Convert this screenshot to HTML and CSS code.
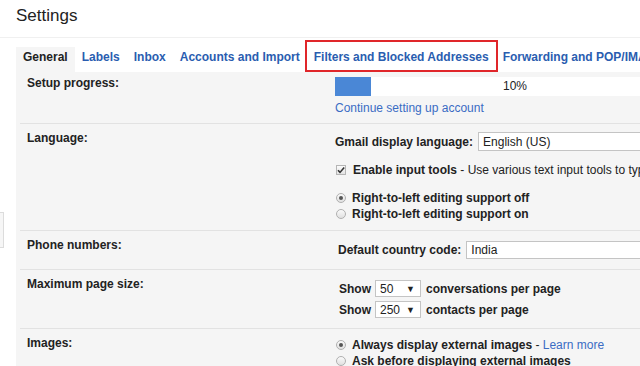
FILE: index.html
```html
<!DOCTYPE html>
<html lang="en">
<head>
  <meta charset="UTF-8" />
  <meta name="viewport" content="width=device-width, initial-scale=1" />
  <title>Settings</title>
  <link rel="stylesheet" href="styles.css">
</head>
<body>
  <div class="page-title">Settings</div>

  <div class="main">
    <div class="gutter"><div class="gutter-tab"></div></div>

    <div class="content">
      <div class="tabs">
        <span class="tab active">General</span>
        <span class="tab">Labels</span>
        <span class="tab">Inbox</span>
        <span class="tab">Accounts and Import</span>
        <span class="tab marked">Filters and Blocked Addresses</span>
        <span class="tab">Forwarding and POP/IMAP</span>
      </div>

      <div class="panel">
        <div class="row first">
          <div class="label">Setup progress:</div>
          <div class="value setup">
            <div class="progress">
              <div class="progress-fill" style="width: 10%"></div>
              <span class="progress-text">10%</span>
            </div>
            <a class="link setup-link">Continue setting up account</a>
          </div>
        </div>

        <div class="row">
          <div class="label">Language:</div>
          <div class="value language">
            <div class="field">
              <b>Gmail display language:</b>
              <span class="select wide">English (US)</span>
            </div>
            <div class="check-line">
              <span class="checkbox">
                <svg width="10" height="10" viewBox="0 0 10 10"><path d="M2 5.2 L4 7.4 L8.2 2.4" fill="none" stroke="#333" stroke-width="1.6"/></svg>
              </span>
              <b>Enable input tools</b>&nbsp;- Use various text input tools to type in the language of your choice
            </div>
            <div class="radios">
              <div class="radio-line"><span class="radio on"></span><b>Right-to-left editing support off</b></div>
              <div class="radio-line"><span class="radio"></span><b>Right-to-left editing support on</b></div>
            </div>
          </div>
        </div>

        <div class="row">
          <div class="label">Phone numbers:</div>
          <div class="value phone">
            <div class="field">
              <b>Default country code:</b>
              <span class="select wide short-gap">India</span>
            </div>
          </div>
        </div>

        <div class="row">
          <div class="label">Maximum page size:</div>
          <div class="value pagesize">
            <div class="show-line">
              <b>Show</b>
              <span class="select small"><span>50</span><span class="arrow">&#9660;</span></span>
              <b>conversations per page</b>
            </div>
            <div class="show-line">
              <b>Show</b>
              <span class="select small"><span>250</span><span class="arrow">&#9660;</span></span>
              <b>contacts per page</b>
            </div>
          </div>
        </div>

        <div class="row">
          <div class="label">Images:</div>
          <div class="value images">
            <div class="radio-line"><span class="radio on"></span><b>Always display external images</b>&nbsp;-&nbsp;<a class="link">Learn more</a></div>
            <div class="radio-line"><span class="radio"></span><b>Ask before displaying external images</b></div>
          </div>
        </div>
      </div>
    </div>
  </div>
</body>
</html>
```

FILE: styles.css
```css
html, body {
  overflow: hidden;
}

body {
  margin: 0;
  font-family: 'Liberation Sans', Arial, sans-serif;
  font-size: 12px;
  color: #222;
  background: #fff;
}

b {
  font-weight: bold;
}

.page-title {
  height: 31px;
  padding: 6px 16px 0;
  font-size: 17px;
  line-height: 20px;
  color: #222;
  border-bottom: 1px solid #f0f0f0;
}

.main {
  display: flex;
}

.gutter {
  width: 16px;
  flex-shrink: 0;
}

.gutter-tab {
  width: 3px;
  height: 34px;
  margin-top: 174px;
  background: #f6f6f6;
  border: 1px solid #dcdcdc;
  border-left: none;
}

.content {
  flex: 1;
  overflow: hidden;
}

/* tab strip */
.tabs {
  display: flex;
  align-items: flex-end;
  height: 34px;
  white-space: nowrap;
}

.tab {
  padding: 0 7px 5px;
  line-height: 20px;
  font-weight: bold;
  color: #2a5db0;
}

.tab.active {
  color: #222;
  background: #f5f5f5;
}

.tab.marked {
  margin: 0 -2px;
  padding: 5px 7px 3px;
  border: 2px solid #e0262a;
}

/* settings panel */
.panel {
  width: 760px;
  background: #f5f5f5;
  padding-bottom: 20px;
}

.row {
  display: grid;
  grid-template-columns: 315px 1fr;
  margin-left: 4px;
  border-top: 1px solid #e2e2e2;
  line-height: 14px;
}

.row.first {
  border-top: none;
}

.label {
  padding: 7px 0 0 7px;
  font-weight: bold;
}

.row.first .label {
  padding-top: 4px;
}

.value {
  white-space: nowrap;
}

.link {
  color: #3a6cc4;
  cursor: pointer;
}

.setup {
  padding: 5px 0 8px;
}

.progress {
  position: relative;
  width: 360px;
  height: 19px;
  background: #fff;
}

.progress-fill {
  height: 100%;
  background: #4a87d6;
}

.progress-text {
  position: absolute;
  top: 0;
  left: 0;
  width: 100%;
  text-align: center;
  line-height: 19px;
}

.setup-link {
  display: block;
  margin-top: 5px;
}

.field {
  display: flex;
  align-items: center;
}

.select {
  display: inline-flex;
  align-items: center;
  box-sizing: border-box;
  background: #fff;
  border: 1px solid #c4c4c4;
  padding: 0 4px;
}

.select.wide {
  width: 200px;
  height: 19px;
  margin-left: 5px;
}

.select.short-gap {
  height: 18px;
}

.select.small {
  justify-content: space-between;
  width: 46px;
  height: 17px;
  margin: 0 5px 0 4px;
  padding-right: 5px;
}

.arrow {
  font-size: 9px;
  color: #222;
}

.language {
  padding: 8px 0 8px;
}

.check-line {
  display: flex;
  align-items: center;
  margin-top: 12px;
}

.checkbox {
  display: inline-flex;
  box-sizing: border-box;
  width: 10px;
  height: 10px;
  margin: 0 7px 0 1px;
  border: 1px solid #b5b5b5;
  background: linear-gradient(#fbfbfb, #e4e4e4);
}

.checkbox svg {
  margin: -1px;
}

.radios {
  margin-top: 13px;
}

.radio-line {
  display: flex;
  align-items: center;
  line-height: 16px;
}

.radio {
  position: relative;
  box-sizing: border-box;
  width: 10px;
  height: 10px;
  margin: 0 6px 0 1px;
  border: 1px solid #b0b0b0;
  border-radius: 50%;
  background: linear-gradient(#fafafa, #e0e0e0);
}

.radio.on::after {
  content: "";
  position: absolute;
  top: 2px;
  left: 2px;
  width: 4px;
  height: 4px;
  border-radius: 50%;
  background: #555;
}

.phone {
  padding: 10px 0 10px 3px;
}

.pagesize {
  padding: 10px 0 10px 4px;
}

.show-line {
  display: flex;
  align-items: center;
  height: 17px;
}

.show-line + .show-line {
  margin-top: 4px;
}

.images {
  padding: 8px 0 0;
}
```
